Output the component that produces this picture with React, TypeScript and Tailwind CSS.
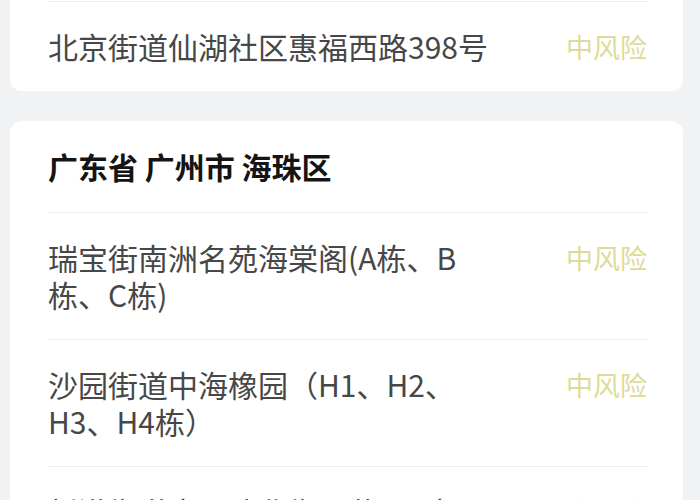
import React from "react";

const font = { fontFamily: '"Noto Sans CJK SC", "Noto Sans", sans-serif' };

function Row({ text, top = true, wide = false }: { text: React.ReactNode; top?: boolean; wide?: boolean }) {
  return (
    <div className={"flex items-start justify-between py-[26px] " + (top ? "border-t border-[#eeeff1]" : "")}>
      <div className={(wide ? "w-[470px]" : "w-[430px]") + " text-[30px] leading-[37px] text-[#474747]"}>{text}</div>
      <div className="text-[27px] leading-[37px] text-[#dedb98] pr-[1px]">中风险</div>
    </div>
  );
}

export default function App() {
  return (
    <div className="w-[700px] h-[500px] overflow-hidden bg-[#f1f2f4] pl-[10px] pr-[17px]" style={font}>
      <div className="-mt-[30px] flex flex-col gap-[30px]">
        <div className="bg-white rounded-[12px] pl-[38px] pr-[35px] pt-[31px]">
          <div className="border-t border-[#eeeff1] h-0" />
          <Row top={false} wide text="北京街道仙湖社区惠福西路398号" />
        </div>
        <div className="bg-white rounded-[12px] pl-[38px] pr-[35px]">
          <div className="h-[91px] flex items-center text-[30px] font-bold text-[#141414]">
            广东省 广州市 海珠区
          </div>
          <Row text="瑞宝街南洲名苑海棠阁(A栋、B栋、C栋)" />
          <Row text="沙园街道中海橡园（H1、H2、H3、H4栋）" />
          <Row text="新港街道南洲路北街一巷2号大院" />
        </div>
      </div>
    </div>
  );
}
